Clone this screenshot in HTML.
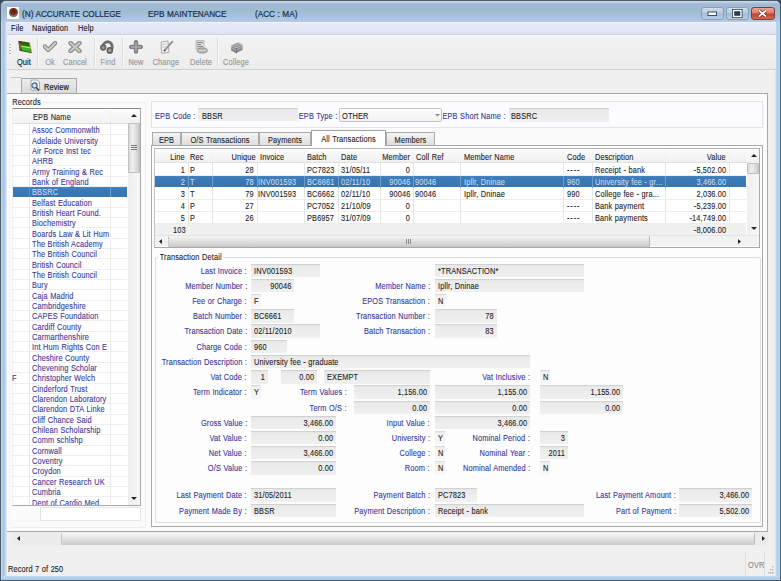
<!DOCTYPE html><html><head><meta charset="utf-8"><style>
*{margin:0;padding:0;box-sizing:border-box}
body{width:781px;height:581px;overflow:hidden;position:relative;background:#3a4a58;font-family:"Liberation Sans",sans-serif;font-size:8.5px;letter-spacing:0.15px;word-spacing:0.3px;color:#222}
div{position:absolute}
.t{white-space:nowrap;line-height:10px;margin-top:-4.5px;-webkit-text-stroke:0.1px currentColor;transform:scaleX(0.87);transform-origin:0 50%}
.tr{transform-origin:100% 50%}
.tc{transform-origin:50% 50%}
.lb{color:#36369a}
.fd{background:linear-gradient(#e6e6e6,#ebebeb 20%,#eeeeee 70%,#f0f0f0);border-top:1px solid #d2d2d2}
</style></head><body>
<div style="left:0px;top:0px;width:781px;height:581px;background:#4a5c6c;border-radius:6px 6px 0 0"></div>
<div style="left:1px;top:1px;width:779px;height:579px;background:linear-gradient(90deg,#d0ecff 0,#aec8e2 1px,#b2cae4 4px,#d8e4f4 5px,#e4ecf8 6px);border-radius:5px 5px 0 0"></div>
<div style="left:775px;top:22px;width:5px;height:558px;background:linear-gradient(90deg,#f2eaf0 0,#c8dcf0 1px,#a8cce8 2px,#b8d8f0 4px)"></div>
<div style="left:1px;top:575.5px;width:779px;height:4.5px;background:linear-gradient(#c0d8f0,#aacae8)"></div>
<div style="left:1px;top:1px;width:779px;height:21px;background:linear-gradient(#d0dce8 0,#b8c8dc 8%,#a2b8d8 15%,#9cbcd0 45%,#a8c4e4 80%,#b0c8e0 92%,#b8c8d8 100%);border-radius:5px 5px 0 0"></div>
<div style="left:7px;top:22px;width:768px;height:553.5px;background:#f0f0f0"></div>
<div style="left:7px;top:7px;width:12px;height:12px;background:#fafcfe"></div>
<div style="left:8.5px;top:7.5px;width:9px;height:9.5px;border-radius:50%;background:radial-gradient(circle at 50% 35%,#5a1a14 0,#7a2a20 40%,#8a6a5a 65%,#6a7a6a 85%,#fafcfe 100%)"></div>
<div class="t" style="left:22px;top:13px;font-size:9.1px;letter-spacing:0;transform:scaleX(0.9);transform-origin:0 0;color:#1a2e48;-webkit-text-stroke:0.2px #1a2e48">(N) ACCURATE COLLEGE</div>
<div class="t" style="left:148px;top:13px;font-size:9.1px;letter-spacing:0;transform:scaleX(0.9);transform-origin:0 0;color:#1a2e48;-webkit-text-stroke:0.2px #1a2e48">EPB MAINTENANCE</div>
<div class="t" style="left:255px;top:13px;font-size:9.1px;letter-spacing:0;transform:scaleX(0.9);transform-origin:0 0;color:#1a2e48;-webkit-text-stroke:0.2px #1a2e48">(ACC : MA)</div>
<div style="left:700.5px;top:7px;width:23px;height:12.5px;border:1px solid #8aa0b8;border-radius:3px;background:linear-gradient(#d0dff0,#b4c8e0 45%,#a4bcd8 55%,#bcd0e8)"></div>
<div style="left:725.5px;top:7px;width:23px;height:12.5px;border:1px solid #8aa0b8;border-radius:3px;background:linear-gradient(#d0dff0,#b4c8e0 45%,#a4bcd8 55%,#bcd0e8)"></div>
<div style="left:750.5px;top:7px;width:24px;height:12.5px;border:1px solid #7a4040;border-radius:3px;background:linear-gradient(#eea898,#dc7a66 45%,#c8402c 55%,#d86a50)"></div>
<svg style="position:absolute;left:700px;top:7px" width="75" height="13" viewBox="0 0 75 13"><rect x="8" y="5" width="8.5" height="3.5" fill="#fff" stroke="#2e3c50" stroke-width="0.9"/><rect x="33.5" y="3.5" width="7.5" height="6" fill="#2e3c50" stroke="#2e3c50" stroke-width="3"/><rect x="33.5" y="3.5" width="7.5" height="6" fill="none" stroke="#fff" stroke-width="1.4"/><path d="M59 3.5L66 9.5M66 3.5L59 9.5" stroke="#5a2a20" stroke-width="3"/><path d="M59 3.5L66 9.5M66 3.5L59 9.5" stroke="#fff" stroke-width="1.7"/></svg>
<div style="left:7px;top:22px;width:769px;height:13px;background:linear-gradient(#f8fcff 0,#e6e9f6 10%,#dfe2f3 90%,#c9cdd9 100%)"></div>
<div class="t" style="left:10.5px;top:27.8px;color:#111">File</div>
<div class="t" style="left:32px;top:27.8px;color:#111">Navigation</div>
<div class="t" style="left:78px;top:27.8px;color:#111">Help</div>
<div style="left:7px;top:35px;width:769px;height:34.5px;background:linear-gradient(#f2f3f2,#eeefee 60%,#ececec);border-top:1px solid #f6f6f6;border-bottom:1px solid #d0d0d0"></div>
<div style="left:9px;top:44px;width:2px;height:1px;background:#b8b8b8"></div>
<div style="left:9px;top:47px;width:2px;height:1px;background:#b8b8b8"></div>
<div style="left:9px;top:50px;width:2px;height:1px;background:#b8b8b8"></div>
<div style="left:9px;top:53px;width:2px;height:1px;background:#b8b8b8"></div>
<div style="left:37px;top:38px;width:1px;height:29px;background:#dcdcdc;box-shadow:1px 0 0 #fafafa"></div>
<div style="left:93.5px;top:38px;width:1px;height:29px;background:#dcdcdc;box-shadow:1px 0 0 #fafafa"></div>
<div style="left:121.5px;top:38px;width:1px;height:29px;background:#dcdcdc;box-shadow:1px 0 0 #fafafa"></div>
<div style="left:216.5px;top:38px;width:1px;height:29px;background:#dcdcdc;box-shadow:1px 0 0 #fafafa"></div>
<div class="t tc" style="left:-6px;width:60px;text-align:center;top:61px;color:#151515;-webkit-text-stroke:0.15px #151515">Quit</div>
<div class="t tc" style="left:19.5px;width:60px;text-align:center;top:61px;color:#9a9a9a;-webkit-text-stroke:0.15px #9a9a9a">Ok</div>
<div class="t tc" style="left:45px;width:60px;text-align:center;top:61px;color:#9a9a9a;-webkit-text-stroke:0.15px #9a9a9a">Cancel</div>
<div class="t tc" style="left:77.5px;width:60px;text-align:center;top:61px;color:#9a9a9a;-webkit-text-stroke:0.15px #9a9a9a">Find</div>
<div class="t tc" style="left:105.5px;width:60px;text-align:center;top:61px;color:#9a9a9a;-webkit-text-stroke:0.15px #9a9a9a">New</div>
<div class="t tc" style="left:135.5px;width:60px;text-align:center;top:61px;color:#9a9a9a;-webkit-text-stroke:0.15px #9a9a9a">Change</div>
<div class="t tc" style="left:170.5px;width:60px;text-align:center;top:61px;color:#9a9a9a;-webkit-text-stroke:0.15px #9a9a9a">Delete</div>
<div class="t tc" style="left:206px;width:60px;text-align:center;top:61px;color:#9a9a9a;-webkit-text-stroke:0.15px #9a9a9a">College</div>
<svg style="position:absolute;left:17.8px;top:40px" width="14" height="14" viewBox="0 0 14 14"><path d="M0.3 0.8L11.5 2.5L13.8 13.2L1.5 10.8Z" fill="#5e3e10"/><path d="M3.2 2.6L11.6 4L12.8 12.2L3.8 10.2Z" fill="#0a7c0e"/><path d="M3.5 7L12.2 8.6L12.8 12.2L3.8 10.2Z" fill="#2cb828"/><path d="M3.2 6.2L12.4 7.8" stroke="#b4e458" stroke-width="1.4"/><path d="M1 3.5L3 4L3.5 9L1.5 8.5Z" fill="#8a6a2a"/><path d="M11.5 2.5L13.8 13.2" stroke="#d8a060" stroke-width="0.8"/></svg>
<svg style="position:absolute;left:42.5px;top:41px" width="14" height="12" viewBox="0 0 14 12"><path d="M1.8 5.5L5.2 9L12.2 2" fill="none" stroke="#8c8c8c" stroke-width="4.2" stroke-linejoin="round" stroke-linecap="round"/><path d="M1.8 5.5L5.2 9L12.2 2" fill="none" stroke="#d0d0d0" stroke-width="1.8" stroke-linejoin="round" stroke-linecap="round"/></svg>
<svg style="position:absolute;left:68px;top:41px" width="14" height="12" viewBox="0 0 14 12"><path d="M2.5 2L11.5 10M11.5 2L2.5 10" stroke="#8e8e8e" stroke-width="4.4" stroke-linecap="round"/><path d="M2.5 2L11.5 10M11.5 2L2.5 10" stroke="#cacaca" stroke-width="2" stroke-linecap="round"/></svg>
<svg style="position:absolute;left:98px;top:38px" width="20" height="18" viewBox="0 0 20 18"><path d="M4.5 9C5 5.5 7.5 3.5 10.5 3.8C13.5 4.3 14.5 7.5 14 11" stroke="#6e6e6e" stroke-width="2.8" fill="none"/><ellipse cx="5.2" cy="9.6" rx="2.4" ry="2.4" fill="#9a9a9a" stroke="#5e5e5e" stroke-width="1.5"/><ellipse cx="11.8" cy="12.4" rx="2.5" ry="2.6" fill="#9a9a9a" stroke="#5e5e5e" stroke-width="1.5"/></svg>
<svg style="position:absolute;left:129px;top:40px" width="14" height="14" viewBox="0 0 14 14"><path d="M7 2.2V11.6M2.3 6.9H11.7" stroke="#7e7e7e" stroke-width="4.4" stroke-linecap="round"/><path d="M7 2.8V11M2.9 6.9H11.1" stroke="#a8a8a8" stroke-width="1.8" stroke-linecap="round"/></svg>
<svg style="position:absolute;left:160px;top:40px" width="14" height="14" viewBox="0 0 14 14"><path d="M1 2L8 1L9 12.5L1.5 13.3Z" fill="#ededed" stroke="#a4a4a4" stroke-width="0.9"/><path d="M2.5 4.5L6.5 4M2.7 7L6.5 6.6" stroke="#c0c0c0" stroke-width="0.8"/><path d="M4.5 10.5L12.8 1.2" stroke="#8e8e8e" stroke-width="1.8"/><path d="M4 11.2L5 9.8" stroke="#5a5a5a" stroke-width="1.5"/></svg>
<svg style="position:absolute;left:194.5px;top:40px" width="13" height="14" viewBox="0 0 13 14"><path d="M1 0.5H9V9H1Z" fill="#dcdcdc" stroke="#b0b0b0" stroke-width="0.8"/><path d="M2 2.5H8M2 4.5H6M2 6.5H8" stroke="#8a8a8a" stroke-width="1.1"/><ellipse cx="7.2" cy="10.5" rx="5.2" ry="2.6" fill="#b4b4b4" stroke="#8c8c8c" stroke-width="0.8"/><path d="M3 10.5H11" stroke="#e0e0e0" stroke-width="0.8"/></svg>
<svg style="position:absolute;left:229.5px;top:40.5px" width="14" height="13" viewBox="0 0 14 13"><path d="M1.5 4.5L8 1.5L12.5 4L12.5 9L6 12.3L1 9.5Z" fill="#8a8a8a"/><path d="M1.5 4.5L6.5 7L12.5 4" stroke="#c4c4c4" stroke-width="0.9" fill="none"/><path d="M2 7L6.3 9.2L12.3 6.2" stroke="#b8b8b8" stroke-width="0.8" fill="none"/><path d="M6.5 7V12.3" stroke="#6a6a6a" stroke-width="0.8"/><path d="M3 3.8L8 1.6L11.5 3.5L6.5 5.8Z" fill="#a8a8a8"/></svg>
<div style="left:7px;top:69.5px;width:768px;height:8px;background:#f0f0f0"></div>
<div style="left:7px;top:93px;width:761px;height:438.5px;background:#fbfbfb;border-top:1px solid #a8a8a8;border-right:1px solid #a8a8a8;border-bottom:1px solid #a8a8a8"></div>
<div style="left:11px;top:76.5px;width:10px;height:1px;background:#c4c4c4"></div>
<div style="left:21px;top:77.5px;width:56px;height:15.5px;background:linear-gradient(#ececec,#dadada);border:1px solid #a8a8a8;border-bottom:none"></div>
<svg style="position:absolute;left:29px;top:79px" width="12" height="13" viewBox="0 0 12 13"><path d="M2 1H8.5L10.5 3V11H2Z" fill="#f4f6f8" stroke="#8a9aac" stroke-width="0.8"/><circle cx="5.5" cy="6.5" r="2.6" fill="#c8dcec" stroke="#4a6a8a" stroke-width="1.2"/><path d="M7.3 8.5L10 11.5" stroke="#3a4a5a" stroke-width="1.6"/></svg>
<div class="t" style="left:44px;top:86px;color:#111;-webkit-text-stroke:0.15px #111">Review</div>
<div style="left:9px;top:101.5px;width:137px;height:426px;border:1px solid #efefef;border-left-color:#f6f6f2;border-radius:2px"></div>
<div class="t" style="left:11px;top:101.5px;background:#fbfbfb;padding:0 1.5px;color:#222;-webkit-text-stroke:0.1px #222">Records</div>
<div style="left:12px;top:108px;width:128.5px;height:397.5px;background:#fff;border-top:1px solid #8a8a8a;border-left:1px solid #f0f0f0;border-right:1px solid #a8a8a8;border-bottom:1px solid #a8a8a8"></div>
<div style="left:12.5px;top:109px;width:115.5px;height:395.5px;overflow:hidden">
<div style="left:0px;top:0px;width:115px;height:15px;background:linear-gradient(#fcfcfc,#f2f2f2);border-bottom:1px solid #dcdcdc"></div>
<div style="left:16.7px;top:15px;width:1px;height:381px;background:#e4e4e4"></div>
<div style="left:97px;top:15px;width:1px;height:381px;background:#ececec"></div>
<div style="left:97px;top:1px;width:1px;height:13px;background:#f2f2f2"></div>
<div class="t" style="left:20px;top:7.5px;color:#262626">EPB Name</div>
<div style="left:0px;top:25.34px;width:114px;height:1px;background:#eeeeee"></div>
<div class="t" style="left:19.2px;top:20.770000000000003px;color:#38389a">Assoc Commonwlth</div>
<div style="left:0px;top:35.68px;width:114px;height:1px;background:#eeeeee"></div>
<div class="t" style="left:19.2px;top:31.11px;color:#38389a">Adelaide University</div>
<div style="left:0px;top:46.019999999999996px;width:114px;height:1px;background:#eeeeee"></div>
<div class="t" style="left:19.2px;top:41.45px;color:#38389a">Air Force Inst tec</div>
<div style="left:0px;top:56.36px;width:114px;height:1px;background:#eeeeee"></div>
<div class="t" style="left:19.2px;top:51.79px;color:#38389a">AHRB</div>
<div style="left:0px;top:66.7px;width:114px;height:1px;background:#eeeeee"></div>
<div class="t" style="left:19.2px;top:62.13px;color:#38389a">Army Training &amp; Rec</div>
<div style="left:0px;top:77.04px;width:114px;height:1px;background:#eeeeee"></div>
<div class="t" style="left:19.2px;top:72.47px;color:#38389a">Bank of England</div>
<div style="left:-1px;top:77.83999999999999px;width:115px;height:9.74px;background:linear-gradient(#4482c0,#3a78b6 30%,#3674b2)"></div>
<div style="left:16.7px;top:77.83999999999999px;width:1px;height:9.74px;background:#5a90c8"></div>
<div style="left:97px;top:77.83999999999999px;width:1px;height:9.74px;background:#6ea0d4"></div>
<div class="t" style="left:19.2px;top:82.80999999999999px;color:#c4dcf2">BBSRC</div>
<div style="left:0px;top:97.72px;width:114px;height:1px;background:#eeeeee"></div>
<div class="t" style="left:19.2px;top:93.14999999999999px;color:#38389a">Belfast Education</div>
<div style="left:0px;top:108.06px;width:114px;height:1px;background:#eeeeee"></div>
<div class="t" style="left:19.2px;top:103.49px;color:#38389a">British Heart Found.</div>
<div style="left:0px;top:118.4px;width:114px;height:1px;background:#eeeeee"></div>
<div class="t" style="left:19.2px;top:113.83px;color:#38389a">Biochemistry</div>
<div style="left:0px;top:128.74px;width:114px;height:1px;background:#eeeeee"></div>
<div class="t" style="left:19.2px;top:124.17px;color:#38389a">Boards Law &amp; Lit Hum</div>
<div style="left:0px;top:139.08px;width:114px;height:1px;background:#eeeeee"></div>
<div class="t" style="left:19.2px;top:134.51px;color:#38389a">The British Academy</div>
<div style="left:0px;top:149.42px;width:114px;height:1px;background:#eeeeee"></div>
<div class="t" style="left:19.2px;top:144.84999999999997px;color:#38389a">The British Council</div>
<div style="left:0px;top:159.76px;width:114px;height:1px;background:#eeeeee"></div>
<div class="t" style="left:19.2px;top:155.18999999999997px;color:#38389a">British Council</div>
<div style="left:0px;top:170.1px;width:114px;height:1px;background:#eeeeee"></div>
<div class="t" style="left:19.2px;top:165.52999999999997px;color:#38389a">The British Council</div>
<div style="left:0px;top:180.44px;width:114px;height:1px;background:#eeeeee"></div>
<div class="t" style="left:19.2px;top:175.86999999999998px;color:#38389a">Bury</div>
<div style="left:0px;top:190.78px;width:114px;height:1px;background:#eeeeee"></div>
<div class="t" style="left:19.2px;top:186.20999999999998px;color:#38389a">Caja Madrid</div>
<div style="left:0px;top:201.12px;width:114px;height:1px;background:#eeeeee"></div>
<div class="t" style="left:19.2px;top:196.54999999999998px;color:#38389a">Cambridgeshire</div>
<div style="left:0px;top:211.46px;width:114px;height:1px;background:#eeeeee"></div>
<div class="t" style="left:19.2px;top:206.89px;color:#38389a">CAPES Foundation</div>
<div style="left:0px;top:221.8px;width:114px;height:1px;background:#eeeeee"></div>
<div class="t" style="left:19.2px;top:217.23px;color:#38389a">Cardiff County</div>
<div style="left:0px;top:232.14000000000001px;width:114px;height:1px;background:#eeeeee"></div>
<div class="t" style="left:19.2px;top:227.57px;color:#38389a">Carmarthenshire</div>
<div style="left:0px;top:242.48px;width:114px;height:1px;background:#eeeeee"></div>
<div class="t" style="left:19.2px;top:237.90999999999997px;color:#38389a">Int Hum Rights Con E</div>
<div style="left:0px;top:252.82px;width:114px;height:1px;background:#eeeeee"></div>
<div class="t" style="left:19.2px;top:248.24999999999997px;color:#38389a">Cheshire County</div>
<div style="left:0px;top:263.15999999999997px;width:114px;height:1px;background:#eeeeee"></div>
<div class="t" style="left:19.2px;top:258.59000000000003px;color:#38389a">Chevening Scholar</div>
<div style="left:0px;top:273.49999999999994px;width:114px;height:1px;background:#eeeeee"></div>
<div class="t" style="left:19.2px;top:268.93px;color:#38389a">Christopher Welch</div>
<div style="left:0px;top:283.84px;width:114px;height:1px;background:#eeeeee"></div>
<div class="t" style="left:19.2px;top:279.27000000000004px;color:#38389a">Cinderford Trust</div>
<div style="left:0px;top:294.17999999999995px;width:114px;height:1px;background:#eeeeee"></div>
<div class="t" style="left:19.2px;top:289.61px;color:#38389a">Clarendon Laboratory</div>
<div style="left:0px;top:304.52px;width:114px;height:1px;background:#eeeeee"></div>
<div class="t" style="left:19.2px;top:299.95000000000005px;color:#38389a">Clarendon DTA Linke</div>
<div style="left:0px;top:314.85999999999996px;width:114px;height:1px;background:#eeeeee"></div>
<div class="t" style="left:19.2px;top:310.29px;color:#38389a">Cliff Chance Said</div>
<div style="left:0px;top:325.2px;width:114px;height:1px;background:#eeeeee"></div>
<div class="t" style="left:19.2px;top:320.63000000000005px;color:#38389a">Chilean Scholarship</div>
<div style="left:0px;top:335.53999999999996px;width:114px;height:1px;background:#eeeeee"></div>
<div class="t" style="left:19.2px;top:330.97px;color:#38389a">Comm schlshp</div>
<div style="left:0px;top:345.88px;width:114px;height:1px;background:#eeeeee"></div>
<div class="t" style="left:19.2px;top:341.31000000000006px;color:#38389a">Cornwall</div>
<div style="left:0px;top:356.21999999999997px;width:114px;height:1px;background:#eeeeee"></div>
<div class="t" style="left:19.2px;top:351.65000000000003px;color:#38389a">Coventry</div>
<div style="left:0px;top:366.55999999999995px;width:114px;height:1px;background:#eeeeee"></div>
<div class="t" style="left:19.2px;top:361.99px;color:#38389a">Croydon</div>
<div style="left:0px;top:376.9px;width:114px;height:1px;background:#eeeeee"></div>
<div class="t" style="left:19.2px;top:372.33000000000004px;color:#38389a">Cancer Research UK</div>
<div style="left:0px;top:387.23999999999995px;width:114px;height:1px;background:#eeeeee"></div>
<div class="t" style="left:19.2px;top:382.67px;color:#38389a">Cumbria</div>
<div style="left:0px;top:397.58px;width:114px;height:1px;background:#eeeeee"></div>
<div class="t" style="left:19.2px;top:393.01000000000005px;color:#38389a">Dept of Cardio Med</div>
</div>
<div class="t" style="left:11.5px;top:377.93px;color:#38389a">F</div>
<div style="left:128px;top:109px;width:11.5px;height:395.5px;background:linear-gradient(90deg,#ededed,#f7f7f7)"></div>
<div style="left:128px;top:109px;width:11.5px;height:13.5px;background:linear-gradient(#fcfcfc,#f0f0f0)"></div>
<svg style="position:absolute;left:131px;top:114px" width="6" height="4"><path d="M0 3L3 0L6 3Z" fill="#222"/></svg>
<div style="left:128px;top:122.5px;width:11.5px;height:50px;background:linear-gradient(90deg,#dadada,#eeeeee 35%,#dedede 70%,#c8c8c8);border:1px solid #c0c0c0;border-radius:1px"></div>
<div style="left:131px;top:144.5px;width:5.5px;height:1px;background:#7a7a7a"></div>
<div style="left:131px;top:146.5px;width:5.5px;height:1px;background:#7a7a7a"></div>
<div style="left:131px;top:148.5px;width:5.5px;height:1px;background:#7a7a7a"></div>
<svg style="position:absolute;left:131px;top:496.5px" width="6" height="4"><path d="M0 0L3 3L6 0Z" fill="#222"/></svg>
<div style="left:40px;top:507px;width:100.5px;height:13.5px;background:#fff;border:1px solid #e6e6e6"></div>
<div style="left:151px;top:101.4px;width:611.5px;height:27px;border:1px solid #e4e4e8;background:#fcfcfe"></div>
<div class="t lb tr" style="right:585.5px;top:115.5px;">EPB Code :</div>
<div class="fd" style="left:198px;top:108px;width:100px;height:13px"></div>
<div class="t" style="left:202px;top:115px;">BBSR</div>
<div class="t lb tr" style="right:444px;top:115.5px;">EPB Type :</div>
<div style="left:339px;top:108px;width:103px;height:14px;background:linear-gradient(#fdfdfd,#f2f2f2);border:1px solid #c4c4c4;border-radius:2px"></div>
<div class="t" style="left:342px;top:115px;">OTHER</div>
<svg style="position:absolute;left:434.5px;top:114px" width="5" height="3"><path d="M0 0L2.5 2.5L5 0Z" fill="#8a8a8a"/></svg>
<div class="t lb tr" style="right:275px;top:115.5px;">EPB Short Name :</div>
<div class="fd" style="left:508.5px;top:108px;width:100px;height:13.5px"></div>
<div class="t" style="left:511px;top:115px;">BBSRC</div>
<div style="left:151px;top:145px;width:611.5px;height:382.2px;background:#fdfdfd;border:1px solid #a8a8a8"></div>
<div style="left:152px;top:132px;width:29px;height:13px;background:linear-gradient(#f4f4f4,#dedede);border:1px solid #acacac;border-bottom:none"></div>
<div class="t tc" style="left:152px;width:29px;text-align:center;top:139px">EPB</div>
<div style="left:181px;top:132px;width:78px;height:13px;background:linear-gradient(#f4f4f4,#dedede);border:1px solid #acacac;border-bottom:none"></div>
<div class="t tc" style="left:181px;width:78px;text-align:center;top:139px">O/S Transactions</div>
<div style="left:259px;top:132px;width:52px;height:13px;background:linear-gradient(#f4f4f4,#dedede);border:1px solid #acacac;border-bottom:none"></div>
<div class="t tc" style="left:259px;width:52px;text-align:center;top:139px">Payments</div>
<div style="left:311px;top:130px;width:75px;height:16px;background:#fff;border:1px solid #a0a0a0;border-bottom:none;z-index:2"></div>
<div class="t tc" style="left:311px;width:75px;text-align:center;top:138px;z-index:3">All Transactions</div>
<div style="left:386px;top:132px;width:49px;height:13px;background:linear-gradient(#f4f4f4,#dedede);border:1px solid #acacac;border-bottom:none"></div>
<div class="t tc" style="left:386px;width:49px;text-align:center;top:139px">Members</div>
<div style="left:154px;top:148px;width:606px;height:99.5px;background:#fff;border:1px solid #a8a8a8;border-left-color:#c4c4c4;border-top-color:#b4b4b4"></div>
<div style="left:155px;top:149px;width:592px;height:14px;background:linear-gradient(#fcfcfc,#f0f0f0);border-bottom:1px solid #e0e0e0"></div>
<div style="left:188px;top:163px;width:1px;height:72px;background:#e6e6e6"></div>
<div style="left:188px;top:150px;width:1px;height:12px;background:#f2f2f2"></div>
<div style="left:212px;top:163px;width:1px;height:72px;background:#e6e6e6"></div>
<div style="left:212px;top:150px;width:1px;height:12px;background:#f2f2f2"></div>
<div style="left:257px;top:163px;width:1px;height:72px;background:#e6e6e6"></div>
<div style="left:257px;top:150px;width:1px;height:12px;background:#f2f2f2"></div>
<div style="left:304px;top:163px;width:1px;height:72px;background:#e6e6e6"></div>
<div style="left:304px;top:150px;width:1px;height:12px;background:#f2f2f2"></div>
<div style="left:338px;top:163px;width:1px;height:72px;background:#e6e6e6"></div>
<div style="left:338px;top:150px;width:1px;height:12px;background:#f2f2f2"></div>
<div style="left:380px;top:163px;width:1px;height:72px;background:#e6e6e6"></div>
<div style="left:380px;top:150px;width:1px;height:12px;background:#f2f2f2"></div>
<div style="left:413px;top:163px;width:1px;height:72px;background:#e6e6e6"></div>
<div style="left:413px;top:150px;width:1px;height:12px;background:#f2f2f2"></div>
<div style="left:460px;top:163px;width:1px;height:72px;background:#e6e6e6"></div>
<div style="left:460px;top:150px;width:1px;height:12px;background:#f2f2f2"></div>
<div style="left:563px;top:163px;width:1px;height:72px;background:#e6e6e6"></div>
<div style="left:563px;top:150px;width:1px;height:12px;background:#f2f2f2"></div>
<div style="left:592px;top:163px;width:1px;height:72px;background:#e6e6e6"></div>
<div style="left:592px;top:150px;width:1px;height:12px;background:#f2f2f2"></div>
<div style="left:665px;top:163px;width:1px;height:72px;background:#e6e6e6"></div>
<div style="left:665px;top:150px;width:1px;height:12px;background:#f2f2f2"></div>
<div style="left:729px;top:163px;width:1px;height:72px;background:#e6e6e6"></div>
<div style="left:729px;top:150px;width:1px;height:12px;background:#f2f2f2"></div>
<div class="t tr" style="right:596px;top:156.3px;">Line</div>
<div class="t" style="left:190px;top:156.3px;">Rec</div>
<div class="t tr" style="right:525px;top:156.3px;">Unique</div>
<div class="t" style="left:260px;top:156.3px;">Invoice</div>
<div class="t" style="left:307px;top:156.3px;">Batch</div>
<div class="t" style="left:341px;top:156.3px;">Date</div>
<div style="left:380.5px;top:150px;width:31px;height:12px;overflow:hidden"><div class="t tr" style="right:1.5px;top:6.3px">Member</div></div>
<div class="t" style="left:416px;top:156.3px;">Coll Ref</div>
<div class="t" style="left:464px;top:156.3px;">Member Name</div>
<div class="t" style="left:567px;top:156.3px;">Code</div>
<div class="t" style="left:595px;top:156.3px;">Description</div>
<div class="t tr" style="right:55px;top:156.3px;">Value</div>
<div style="left:155px;top:175.0px;width:591px;height:1px;background:#ececec"></div>
<div class="t tr" style="right:596px;top:169.8px;color:#222">1</div>
<div class="t" style="left:190px;top:169.8px;color:#222">P</div>
<div class="t tr" style="right:527px;top:169.8px;color:#222">28</div>
<div class="t" style="left:258px;top:169.8px;color:#222"></div>
<div class="t" style="left:307px;top:169.8px;color:#222">PC7823</div>
<div class="t" style="left:341px;top:169.8px;color:#222">31/05/11</div>
<div class="t tr" style="right:371px;top:169.8px;color:#222">0</div>
<div class="t" style="left:415px;top:169.8px;color:#222"></div>
<div class="t" style="left:464px;top:169.8px;color:#222"></div>
<div class="t" style="left:567px;top:169.8px;color:#222;letter-spacing:1px">----</div>
<div class="t" style="left:595px;top:169.8px;color:#222">Receipt - bank</div>
<div class="t tr" style="right:55px;top:169.8px;color:#222">-5,502.00</div>
<div style="left:155px;top:176.0px;width:591px;height:11.3px;background:linear-gradient(#4482c0,#3a78b6 30%,#3674b2)"></div>
<div style="left:188px;top:176.0px;width:1px;height:11.5px;background:#6c9ccc"></div>
<div style="left:212px;top:176.0px;width:1px;height:11.5px;background:#6c9ccc"></div>
<div style="left:257px;top:176.0px;width:1px;height:11.5px;background:#6c9ccc"></div>
<div style="left:304px;top:176.0px;width:1px;height:11.5px;background:#6c9ccc"></div>
<div style="left:338px;top:176.0px;width:1px;height:11.5px;background:#6c9ccc"></div>
<div style="left:380px;top:176.0px;width:1px;height:11.5px;background:#6c9ccc"></div>
<div style="left:413px;top:176.0px;width:1px;height:11.5px;background:#6c9ccc"></div>
<div style="left:460px;top:176.0px;width:1px;height:11.5px;background:#6c9ccc"></div>
<div style="left:563px;top:176.0px;width:1px;height:11.5px;background:#6c9ccc"></div>
<div style="left:592px;top:176.0px;width:1px;height:11.5px;background:#6c9ccc"></div>
<div style="left:665px;top:176.0px;width:1px;height:11.5px;background:#6c9ccc"></div>
<div class="t tr" style="right:596px;top:181.8px;color:#c4dcf2">2</div>
<div class="t" style="left:190px;top:181.8px;color:#c4dcf2">T</div>
<div class="t tr" style="right:527px;top:181.8px;color:#c4dcf2">78</div>
<div class="t" style="left:258px;top:181.8px;color:#c4dcf2">INV001593</div>
<div class="t" style="left:307px;top:181.8px;color:#c4dcf2">BC6661</div>
<div class="t" style="left:341px;top:181.8px;color:#c4dcf2">02/11/10</div>
<div class="t tr" style="right:371px;top:181.8px;color:#c4dcf2">90046</div>
<div class="t" style="left:415px;top:181.8px;color:#c4dcf2">90046</div>
<div class="t" style="left:464px;top:181.8px;color:#c4dcf2">Ipllr, Dninae</div>
<div class="t" style="left:567px;top:181.8px;color:#c4dcf2">960</div>
<div class="t" style="left:595px;top:181.8px;color:#c4dcf2">University fee - gr...</div>
<div class="t tr" style="right:55px;top:181.8px;color:#c4dcf2">3,466.00</div>
<div style="left:155px;top:199.0px;width:591px;height:1px;background:#ececec"></div>
<div class="t tr" style="right:596px;top:193.8px;color:#222">3</div>
<div class="t" style="left:190px;top:193.8px;color:#222">T</div>
<div class="t tr" style="right:527px;top:193.8px;color:#222">79</div>
<div class="t" style="left:258px;top:193.8px;color:#222">INV001593</div>
<div class="t" style="left:307px;top:193.8px;color:#222">BC6662</div>
<div class="t" style="left:341px;top:193.8px;color:#222">02/11/10</div>
<div class="t tr" style="right:371px;top:193.8px;color:#222">90046</div>
<div class="t" style="left:415px;top:193.8px;color:#222">90046</div>
<div class="t" style="left:464px;top:193.8px;color:#222">Ipllr, Dninae</div>
<div class="t" style="left:567px;top:193.8px;color:#222">990</div>
<div class="t" style="left:595px;top:193.8px;color:#222">College fee - gra...</div>
<div class="t tr" style="right:55px;top:193.8px;color:#222">2,036.00</div>
<div style="left:155px;top:211.0px;width:591px;height:1px;background:#ececec"></div>
<div class="t tr" style="right:596px;top:205.8px;color:#222">4</div>
<div class="t" style="left:190px;top:205.8px;color:#222">P</div>
<div class="t tr" style="right:527px;top:205.8px;color:#222">27</div>
<div class="t" style="left:258px;top:205.8px;color:#222"></div>
<div class="t" style="left:307px;top:205.8px;color:#222">PC7052</div>
<div class="t" style="left:341px;top:205.8px;color:#222">21/10/09</div>
<div class="t tr" style="right:371px;top:205.8px;color:#222">0</div>
<div class="t" style="left:415px;top:205.8px;color:#222"></div>
<div class="t" style="left:464px;top:205.8px;color:#222"></div>
<div class="t" style="left:567px;top:205.8px;color:#222;letter-spacing:1px">----</div>
<div class="t" style="left:595px;top:205.8px;color:#222">Bank payment</div>
<div class="t tr" style="right:55px;top:205.8px;color:#222">-5,239.00</div>
<div style="left:155px;top:223.0px;width:591px;height:1px;background:#ececec"></div>
<div class="t tr" style="right:596px;top:217.8px;color:#222">5</div>
<div class="t" style="left:190px;top:217.8px;color:#222">P</div>
<div class="t tr" style="right:527px;top:217.8px;color:#222">26</div>
<div class="t" style="left:258px;top:217.8px;color:#222"></div>
<div class="t" style="left:307px;top:217.8px;color:#222">PB6957</div>
<div class="t" style="left:341px;top:217.8px;color:#222">31/07/09</div>
<div class="t tr" style="right:371px;top:217.8px;color:#222">0</div>
<div class="t" style="left:415px;top:217.8px;color:#222"></div>
<div class="t" style="left:464px;top:217.8px;color:#222"></div>
<div class="t" style="left:567px;top:217.8px;color:#222;letter-spacing:1px">----</div>
<div class="t" style="left:595px;top:217.8px;color:#222">Bank payments</div>
<div class="t tr" style="right:55px;top:217.8px;color:#222">-14,749.00</div>
<div style="left:155px;top:223.5px;width:591px;height:11.5px;background:#f0f0f0"></div>
<div class="t tr" style="right:595px;top:229px;">103</div>
<div class="t tr" style="right:55px;top:229px;">-8,006.00</div>
<div style="left:747px;top:149px;width:12px;height:86px;background:linear-gradient(90deg,#efefef,#f7f7f7)"></div>
<div style="left:747px;top:149px;width:12px;height:14px;background:linear-gradient(#fcfcfc,#f0f0f0)"></div>
<svg style="position:absolute;left:750.5px;top:154px" width="6" height="4"><path d="M0 3L3 0L6 3Z" fill="#222"/></svg>
<div style="left:747px;top:162.5px;width:12px;height:11px;background:linear-gradient(90deg,#dadada,#eeeeee 35%,#dedede 70%,#c8c8c8);border:1px solid #c0c0c0;border-radius:1px"></div>
<svg style="position:absolute;left:750.5px;top:226.5px" width="6" height="4"><path d="M0 0L3 3L6 0Z" fill="#222"/></svg>
<div style="left:155px;top:234.7px;width:604px;height:11.8px;background:#f2f2f2;border-top:1px solid #e4e4e4"></div>
<svg style="position:absolute;left:159px;top:238.5px" width="4" height="5"><path d="M3 0L0 2.5L3 5Z" fill="#222"/></svg>
<div style="left:168px;top:235.5px;width:482px;height:11px;background:linear-gradient(#f4f4f4,#e4e4e4 40%,#c8c8c8);border-left:1px solid #c8c8c8;border-right:1px solid #b8b8b8;border-radius:1px"></div>
<svg style="position:absolute;left:738px;top:238.5px" width="4" height="5"><path d="M0 0L3 2.5L0 5Z" fill="#222"/></svg>
<div style="left:405.5px;top:238.5px;width:1px;height:5px;background:#8a8a8a"></div>
<div style="left:407.5px;top:238.5px;width:1px;height:5px;background:#8a8a8a"></div>
<div style="left:409.5px;top:238.5px;width:1px;height:5px;background:#8a8a8a"></div>
<div style="left:154.5px;top:256.5px;width:606px;height:266px;border:1px solid #dedede;border-radius:2px"></div>
<div class="t" style="left:158px;top:256px;background:#fff;padding:0 2px">Transaction Detail</div>
<div class="t lb tr" style="right:534px;top:270px;">Last Invoice :</div>
<div class="fd" style="left:251px;top:263.5px;width:69px;height:13.5px;"></div>
<div class="t" style="left:254px;top:270px;">INV001593</div>
<div class="fd" style="left:435px;top:263.5px;width:149px;height:13.5px;"></div>
<div class="t" style="left:438px;top:270px;">*TRANSACTION*</div>
<div class="t lb tr" style="right:534px;top:285px;">Member Number :</div>
<div class="fd" style="left:251px;top:278.5px;width:43px;height:13.5px;"></div>
<div class="t tr" style="right:490px;top:285px;">90046</div>
<div class="t lb tr" style="right:351px;top:285px;">Member Name :</div>
<div class="fd" style="left:435px;top:278.5px;width:149px;height:13.5px;"></div>
<div class="t" style="left:438px;top:285px;">Ipllr, Dninae</div>
<div class="t lb tr" style="right:534px;top:300px;">Fee or Charge :</div>
<div class="fd" style="left:251px;top:293.5px;width:10px;height:13.5px;background:linear-gradient(#ececec,#f4f4f4 30%,#f6f6f6);border-top-color:#dadada"></div>
<div class="t" style="left:254px;top:300px;">F</div>
<div class="t lb tr" style="right:351px;top:300px;">EPOS Transaction :</div>
<div class="fd" style="left:435px;top:293.5px;width:11px;height:13.5px;background:linear-gradient(#ececec,#f4f4f4 30%,#f6f6f6);border-top-color:#dadada"></div>
<div class="t" style="left:438px;top:300px;">N</div>
<div class="t lb tr" style="right:534px;top:315.5px;">Batch Number :</div>
<div class="fd" style="left:251px;top:309.0px;width:43px;height:13.5px;"></div>
<div class="t" style="left:254px;top:315.5px;">BC6661</div>
<div class="t lb tr" style="right:351px;top:315.5px;">Transaction Number :</div>
<div class="fd" style="left:435px;top:309.0px;width:62px;height:13.5px;"></div>
<div class="t tr" style="right:287px;top:315.5px;">78</div>
<div class="t lb tr" style="right:534px;top:330.5px;">Transaction Date :</div>
<div class="fd" style="left:251px;top:324.0px;width:69px;height:13.5px;"></div>
<div class="t" style="left:254px;top:330.5px;">02/11/2010</div>
<div class="t lb tr" style="right:351px;top:330.5px;">Batch Transaction :</div>
<div class="fd" style="left:435px;top:324.0px;width:62px;height:13.5px;"></div>
<div class="t tr" style="right:287px;top:330.5px;">83</div>
<div class="t lb tr" style="right:534px;top:346px;">Charge Code :</div>
<div class="fd" style="left:251px;top:339.5px;width:36px;height:13.5px;"></div>
<div class="t" style="left:254px;top:346px;">960</div>
<div class="t lb tr" style="right:534px;top:361px;">Transaction Description :</div>
<div class="fd" style="left:251px;top:354.5px;width:279px;height:13.5px;"></div>
<div class="t" style="left:254px;top:361px;">University fee - graduate</div>
<div class="t lb tr" style="right:534px;top:376.5px;">Vat Code :</div>
<div class="fd" style="left:251px;top:370.0px;width:17px;height:13.5px;"></div>
<div class="t tr" style="right:516px;top:376.5px;">1</div>
<div class="fd" style="left:281px;top:370.0px;width:36px;height:13.5px;"></div>
<div class="t tr" style="right:467px;top:376.5px;">0.00</div>
<div class="fd" style="left:324px;top:370.0px;width:106px;height:13.5px;"></div>
<div class="t" style="left:327px;top:376.5px;">EXEMPT</div>
<div class="t lb tr" style="right:251px;top:376.5px;">Vat Inclusive :</div>
<div class="fd" style="left:540px;top:370.0px;width:10px;height:13.5px;background:linear-gradient(#ececec,#f4f4f4 30%,#f6f6f6);border-top-color:#dadada"></div>
<div class="t" style="left:543px;top:376.5px;">N</div>
<div class="t lb tr" style="right:534px;top:391.5px;">Term Indicator :</div>
<div class="fd" style="left:251px;top:385.0px;width:10px;height:13.5px;background:linear-gradient(#ececec,#f4f4f4 30%,#f6f6f6);border-top-color:#dadada"></div>
<div class="t" style="left:254px;top:391.5px;">Y</div>
<div class="t lb tr" style="right:434px;top:391.5px;">Term Values :</div>
<div class="fd" style="left:354px;top:385.0px;width:76px;height:13.5px;"></div>
<div class="t tr" style="right:354px;top:391.5px;">1,156.00</div>
<div class="fd" style="left:435px;top:385.0px;width:95px;height:13.5px;"></div>
<div class="t tr" style="right:254px;top:391.5px;">1,155.00</div>
<div class="fd" style="left:540px;top:385.0px;width:83px;height:13.5px;"></div>
<div class="t tr" style="right:161px;top:391.5px;">1,155.00</div>
<div class="t lb tr" style="right:434px;top:407px;">Term O/S :</div>
<div class="fd" style="left:354px;top:400.5px;width:76px;height:13.5px;"></div>
<div class="t tr" style="right:354px;top:407px;">0.00</div>
<div class="fd" style="left:435px;top:400.5px;width:95px;height:13.5px;"></div>
<div class="t tr" style="right:254px;top:407px;">0.00</div>
<div class="fd" style="left:540px;top:400.5px;width:83px;height:13.5px;"></div>
<div class="t tr" style="right:161px;top:407px;">0.00</div>
<div class="t lb tr" style="right:534px;top:422px;">Gross Value :</div>
<div class="fd" style="left:251px;top:415.5px;width:85px;height:13.5px;"></div>
<div class="t tr" style="right:448px;top:422px;">3,466.00</div>
<div class="t lb tr" style="right:351px;top:422px;">Input Value :</div>
<div class="fd" style="left:435px;top:415.5px;width:95px;height:13.5px;"></div>
<div class="t tr" style="right:254px;top:422px;">3,466.00</div>
<div class="t lb tr" style="right:534px;top:437px;">Vat Value :</div>
<div class="fd" style="left:251px;top:430.5px;width:85px;height:13.5px;"></div>
<div class="t tr" style="right:448px;top:437px;">0.00</div>
<div class="t lb tr" style="right:351px;top:437px;">University :</div>
<div class="fd" style="left:435px;top:430.5px;width:10px;height:13.5px;background:linear-gradient(#ececec,#f4f4f4 30%,#f6f6f6);border-top-color:#dadada"></div>
<div class="t" style="left:438px;top:437px;">Y</div>
<div class="t lb tr" style="right:251px;top:437px;">Nominal Period :</div>
<div class="fd" style="left:540px;top:430.5px;width:28px;height:13.5px;"></div>
<div class="t tr" style="right:216px;top:437px;">3</div>
<div class="t lb tr" style="right:534px;top:452px;">Net Value :</div>
<div class="fd" style="left:251px;top:445.5px;width:85px;height:13.5px;"></div>
<div class="t tr" style="right:448px;top:452px;">3,466.00</div>
<div class="t lb tr" style="right:351px;top:452px;">College :</div>
<div class="fd" style="left:435px;top:445.5px;width:10px;height:13.5px;background:linear-gradient(#ececec,#f4f4f4 30%,#f6f6f6);border-top-color:#dadada"></div>
<div class="t" style="left:438px;top:452px;">N</div>
<div class="t lb tr" style="right:251px;top:452px;">Nominal Year :</div>
<div class="fd" style="left:540px;top:445.5px;width:28px;height:13.5px;"></div>
<div class="t tr" style="right:216px;top:452px;">2011</div>
<div class="t lb tr" style="right:534px;top:467.5px;">O/S Value :</div>
<div class="fd" style="left:251px;top:461.0px;width:85px;height:13.5px;"></div>
<div class="t tr" style="right:448px;top:467.5px;">0.00</div>
<div class="t lb tr" style="right:351px;top:467.5px;">Room :</div>
<div class="fd" style="left:435px;top:461.0px;width:10px;height:13.5px;background:linear-gradient(#ececec,#f4f4f4 30%,#f6f6f6);border-top-color:#dadada"></div>
<div class="t" style="left:438px;top:467.5px;">N</div>
<div class="t lb tr" style="right:251px;top:467.5px;">Nominal Amended :</div>
<div class="fd" style="left:540px;top:461.0px;width:10px;height:13.5px;background:linear-gradient(#ececec,#f4f4f4 30%,#f6f6f6);border-top-color:#dadada"></div>
<div class="t" style="left:543px;top:467.5px;">N</div>
<div class="t lb tr" style="right:534px;top:494.5px;">Last Payment Date :</div>
<div class="fd" style="left:251px;top:488.0px;width:85px;height:13.5px;"></div>
<div class="t" style="left:254px;top:494.5px;">31/05/2011</div>
<div class="t lb tr" style="right:351px;top:494.5px;">Payment Batch :</div>
<div class="fd" style="left:435px;top:488.0px;width:42px;height:13.5px;"></div>
<div class="t" style="left:438px;top:494.5px;">PC7823</div>
<div class="t lb tr" style="right:105px;top:494.5px;">Last Payment Amount :</div>
<div class="fd" style="left:679px;top:488.0px;width:73px;height:13.5px;"></div>
<div class="t tr" style="right:32px;top:494.5px;">3,466.00</div>
<div class="t lb tr" style="right:534px;top:510px;">Payment Made By :</div>
<div class="fd" style="left:251px;top:503.5px;width:85px;height:13.5px;"></div>
<div class="t" style="left:254px;top:510px;">BBSR</div>
<div class="t lb tr" style="right:351px;top:510px;">Payment Description :</div>
<div class="fd" style="left:435px;top:503.5px;width:149px;height:13.5px;"></div>
<div class="t" style="left:438px;top:510px;">Receipt - bank</div>
<div class="t lb tr" style="right:105px;top:510px;">Part of Payment :</div>
<div class="fd" style="left:679px;top:503.5px;width:73px;height:13.5px;"></div>
<div class="t tr" style="right:32px;top:510px;">5,502.00</div>
<div style="left:11.5px;top:531.5px;width:756.5px;height:13px;background:#ececec"></div>
<svg style="position:absolute;left:16.5px;top:536px" width="4" height="5"><path d="M3 0L0 2.5L3 5Z" fill="#222"/></svg>
<div style="left:61.2px;top:533px;width:694px;height:11.5px;background:linear-gradient(#f6f6f6,#e6e6e6 40%,#cacaca);border-left:1px solid #c8c8c8;border-right:1px solid #bcbcbc;border-radius:1px"></div>
<svg style="position:absolute;left:761.5px;top:536px" width="4" height="5"><path d="M0 0L3 2.5L0 5Z" fill="#222"/></svg>
<div class="t" style="left:8px;top:568.2px;color:#1a1a1a">Record 7 of 250</div>
<div style="left:745px;top:552px;width:20px;height:24px;border-left:1px solid #dedede;border-right:1px solid #dedede"></div>
<div class="t" style="left:748px;top:564.5px;color:#8a8a8a">OVR</div>
<svg style="position:absolute;left:767px;top:566px" width="8" height="8"><g fill="#b8b8b8"><rect x="5" y="0" width="1.5" height="1.5"/><rect x="3" y="3" width="1.5" height="1.5"/><rect x="5" y="3" width="1.5" height="1.5"/><rect x="1" y="6" width="1.5" height="1.5"/><rect x="3" y="6" width="1.5" height="1.5"/><rect x="5" y="6" width="1.5" height="1.5"/></g></svg>
</body></html>
